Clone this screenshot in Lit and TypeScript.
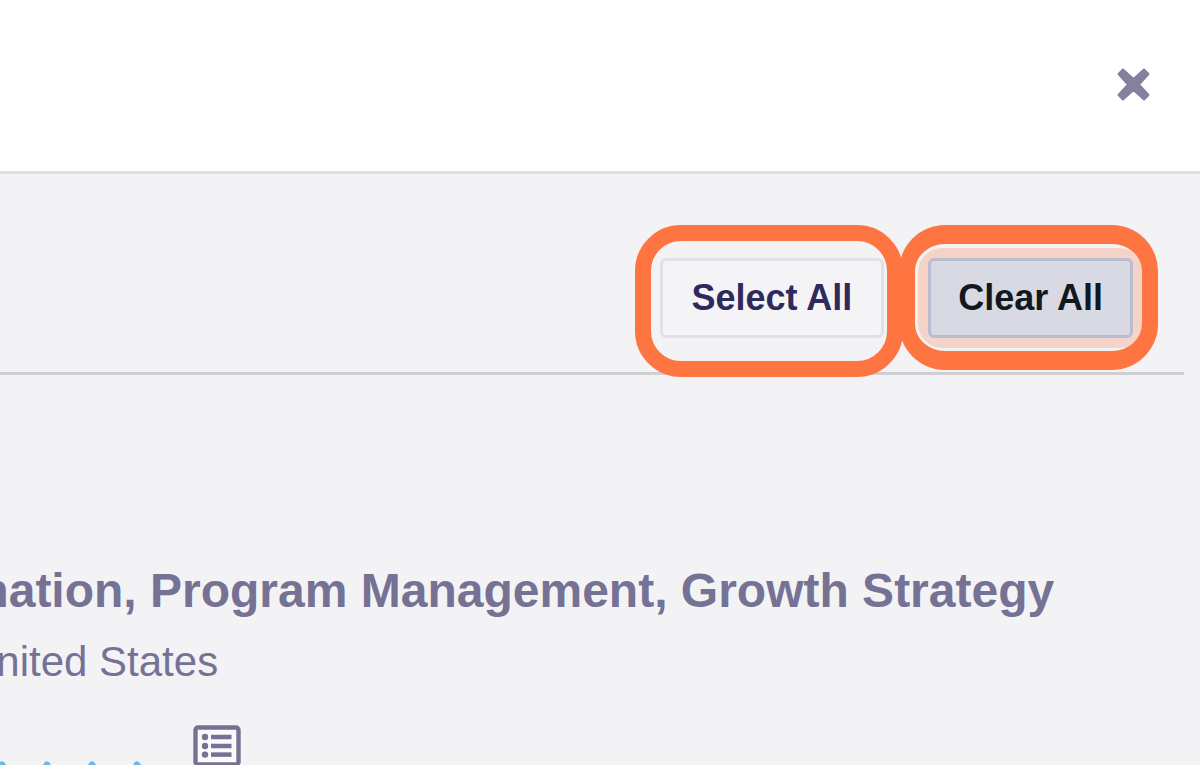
import { LitElement, html, css, svg } from "lit";
import { customElement } from "lit/decorators.js";

@customElement("app-root")
export class AppRoot extends LitElement {
  static styles = css`
    :host {
      display: flex;
      flex-direction: column;
      height: 100vh;
      overflow: hidden;
      background: #f3f3f6;
      color: #757294;
      font-family: "Liberation Sans", Arial, sans-serif;
    }
    * {
      box-sizing: border-box;
    }
    header {
      display: flex;
      flex: none;
      justify-content: flex-end;
      padding: 68px 50px 70px;
      background: #fff;
      border-bottom: 3px solid #dddde7;
    }
    button {
      font: inherit;
      cursor: pointer;
    }
    .close {
      width: 33px;
      height: 33px;
      padding: 0;
      border: 0;
      background: none;
      color: #83819e;
    }
    svg {
      display: block;
      width: 100%;
      height: 100%;
    }
    .toolbar {
      display: flex;
      flex: none;
      justify-content: flex-end;
      gap: 44px;
      margin-right: 16px;
      padding: 84px 51px 34px;
      border-bottom: 3px solid #cfcfd2;
    }
    .action {
      position: relative;
      height: 80px;
      padding: 0 29px;
      border: 3px solid #e0e0e8;
      border-radius: 6px;
      background: #f4f4f7;
      color: #2f2a5c;
      font-size: 36px;
      font-weight: 700;
      line-height: 44px;
      white-space: nowrap;
    }
    .pressed {
      z-index: 0;
      padding: 0 27px;
      border-color: #b9bdcf;
      background: #d9d9e3;
      color: #101820;
      outline: none;
      box-shadow: 0 0 0 6px #f6d3c9;
    }
    .pressed::before {
      content: "";
      position: absolute;
      inset: -13px;
      border: 6px solid #f6d3c9;
      border-radius: 24px;
      z-index: -1;
    }
    .action::after {
      content: "";
      position: absolute;
      inset: -36px -22px -42px -28px;
      border: 16px solid #ff7542;
      border-radius: 46px;
    }
    .pressed::after {
      inset: -36px -28px -35px -32px;
      border-width: 19px 16px;
    }
    .result {
      display: flex;
      flex-direction: column;
      margin-left: -34px;
      padding-top: 188px;
      white-space: nowrap;
    }
    h2 {
      margin: 0 0 19px;
      font-size: 48px;
      line-height: 56px;
    }
    p {
      margin: 0;
      font-size: 42px;
      line-height: 48px;
    }
    .meta {
      display: flex;
      align-items: flex-start;
      gap: 36px;
      padding-top: 39px;
    }
    .stars {
      display: flex;
      gap: 5px;
      padding: 36px 0 0 16px;
      color: #6bb8ee;
    }
    .star {
      flex: none;
      width: 40px;
      height: 40px;
    }
    .list {
      flex: none;
      width: 48px;
      height: 42px;
    }
  `;

  private star() {
    return html`<span class="star"
      ><svg viewBox="0 0 40 40" aria-hidden="true">
        <path
          d="M20 4L25 14L37 15.500L28 24L30.500 36L20 30L9.500 36L12 24L3 15.500L15 14Z"
          fill="currentColor"
          stroke="currentColor"
          stroke-width="7"
          stroke-linejoin="round"
        /></svg
    ></span>`;
  }

  render() {
    return html`
      <header>
        <button class="close" type="button" aria-label="Close">
          <svg viewBox="0 0 33 33" aria-hidden="true">
            <path
              d="M6 1.500L16.500 11L27 1.500L31.500 6L22 16.500L31.500 27L27 31.500L16.500 22L6 31.500L1.500 27L11 16.500L1.500 6Z"
              fill="currentColor"
              stroke="currentColor"
              stroke-width="2"
              stroke-linejoin="round"
            />
          </svg>
        </button>
      </header>
      <div class="toolbar">
        <button class="action" type="button">Select All</button>
        <button class="action pressed" type="button">Clear All</button>
      </div>
      <section class="result">
        <h2>mation, Program Management, Growth Strategy</h2>
        <p>United States</p>
        <div class="meta">
          <div class="stars">${[0, 1, 2, 3].map(() => this.star())}</div>
          <span class="list">
            <svg viewBox="0 0 48 42" aria-hidden="true">
              <rect x="2.500" y="2.500" width="43" height="37" rx="2.500" fill="#fafafc" stroke="currentColor" stroke-width="4.400" />
              ${[12, 21, 29.6].map(
                (y) => svg`<circle cx="12" cy=${y} r="3.200" fill="currentColor" />
                  <path d="M18 ${y}H38.500" stroke="currentColor" stroke-width="4.500" />`
              )}
            </svg>
          </span>
        </div>
      </section>
    `;
  }
}
